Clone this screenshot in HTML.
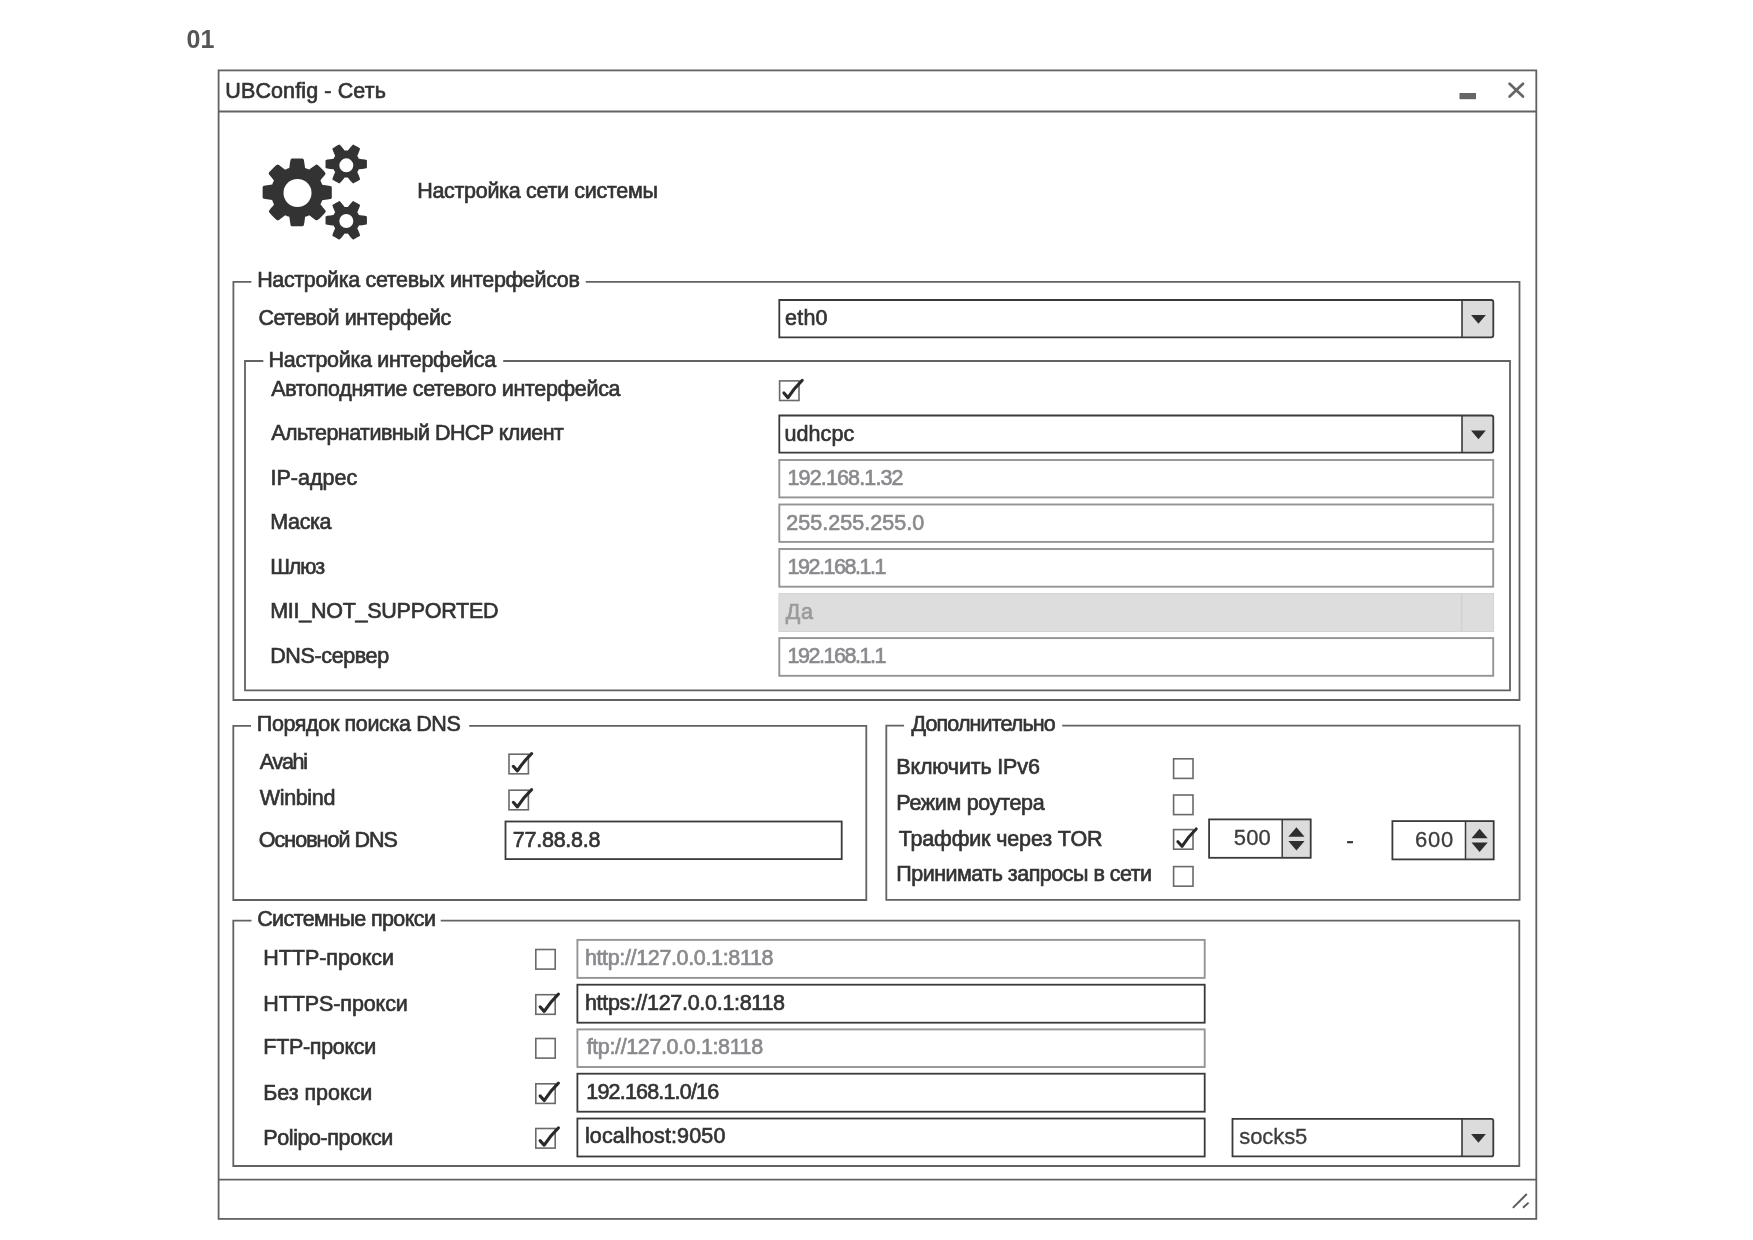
<!DOCTYPE html>
<html lang="ru"><head><meta charset="utf-8"><title>UBConfig - Сеть</title>
<style>
html,body{margin:0;padding:0;background:#fff;}
body{width:1753px;height:1240px;position:relative;overflow:hidden;font-family:"Liberation Sans", sans-serif;filter:blur(0.45px);}
svg{position:absolute;left:0;top:0;}
span{position:absolute;white-space:pre;line-height:1;}
</style></head><body>
<svg width="1753" height="1240" viewBox="0 0 1753 1240">
<rect x="218.6" y="70.4" width="1317.7" height="1148.5" rx="0" stroke="#626262" stroke-width="1.8" fill="none"/>
<path d="M218.6 111.5L1536.3 111.5" stroke="#626262" stroke-width="1.8" fill="none"/>
<path d="M218.6 1179.7L1536.3 1179.7" stroke="#626262" stroke-width="1.8" fill="none"/>
<rect x="1459.5" y="93" width="16.5" height="6.2" fill="#666"/>
<path d="M1509.6 83.8L1523 96.6M1523 83.8L1509.6 96.6" stroke="#666" stroke-width="2.7" stroke-linecap="round" fill="none"/>
<path d="M1512.9 1207.8L1526.8 1194M1523 1207.8L1528.6 1202.6" stroke="#5a5a5a" stroke-width="1.9" fill="none"/>
<path d="M251.4 281.8L233.4 281.8L233.4 700.0L1519.5 700.0L1519.5 281.8L585.8 281.8" stroke="#626262" stroke-width="1.8" fill="none"/>
<path d="M263.3 361.0L245.0 361.0L245.0 690.4L1510.0 690.4L1510.0 361.0L503.2 361.0" stroke="#626262" stroke-width="1.8" fill="none"/>
<path d="M251.0 725.9L233.3 725.9L233.3 900.0L866.3 900.0L866.3 725.9L469.2 725.9" stroke="#626262" stroke-width="1.8" fill="none"/>
<path d="M904.1 725.6L886.3 725.6L886.3 899.8L1519.6 899.8L1519.6 725.6L1062.2 725.6" stroke="#626262" stroke-width="1.8" fill="none"/>
<path d="M251.5 920.7L233.3 920.7L233.3 1166.0L1519.3 1166.0L1519.3 920.7L440.7 920.7" stroke="#626262" stroke-width="1.8" fill="none"/>
<path d="M1462 300.0H1491.3Q1493.3 300.0 1493.3 302.0V335.3Q1493.3 337.3 1491.3 337.3H1462Z" fill="#dcdcdc"/>
<path d="M779.3 300.0H1491.3Q1493.3 300.0 1493.3 302.0V335.3Q1493.3 337.3 1491.3 337.3H779.3Z" fill="none" stroke="#3a3a3a" stroke-width="1.8"/>
<path d="M1462 300.0L1462 337.3" stroke="#3a3a3a" stroke-width="1.6" fill="none"/>
<path d="M1471.05 315.05H1485.8500000000001L1478.45 323.75Z" fill="#2e2e2e"/>
<path d="M1462 415.5H1491.3Q1493.3 415.5 1493.3 417.5V450.6Q1493.3 452.6 1491.3 452.6H1462Z" fill="#dcdcdc"/>
<path d="M779.3 415.5H1491.3Q1493.3 415.5 1493.3 417.5V450.6Q1493.3 452.6 1491.3 452.6H779.3Z" fill="none" stroke="#3a3a3a" stroke-width="1.8"/>
<path d="M1462 415.5L1462 452.6" stroke="#3a3a3a" stroke-width="1.6" fill="none"/>
<path d="M1471.05 430.45000000000005H1485.8500000000001L1478.45 439.15000000000003Z" fill="#2e2e2e"/>
<path d="M1462 1118.8H1491.3Q1493.3 1118.8 1493.3 1120.8V1154.4Q1493.3 1156.4 1491.3 1156.4H1462Z" fill="#dcdcdc"/>
<path d="M1232.5 1118.8H1491.3Q1493.3 1118.8 1493.3 1120.8V1154.4Q1493.3 1156.4 1491.3 1156.4H1232.5Z" fill="none" stroke="#3a3a3a" stroke-width="1.8"/>
<path d="M1462 1118.8L1462 1156.4" stroke="#3a3a3a" stroke-width="1.6" fill="none"/>
<path d="M1471.05 1133.9999999999998H1485.8500000000001L1478.45 1142.6999999999998Z" fill="#2e2e2e"/>
<rect x="779.3" y="460.0" width="713.9" height="37.4" rx="0" stroke="#949498" stroke-width="1.9" fill="#fff"/>
<rect x="779.3" y="504.5" width="713.9" height="37.4" rx="0" stroke="#949498" stroke-width="1.9" fill="#fff"/>
<rect x="779.3" y="549.0" width="713.9" height="37.7" rx="0" stroke="#949498" stroke-width="1.9" fill="#fff"/>
<rect x="779.3" y="638.1" width="713.9" height="37.7" rx="0" stroke="#949498" stroke-width="1.9" fill="#fff"/>
<rect x="778.9" y="593.5" width="714.7" height="38.0" fill="#dddddd" stroke="#d4d4d4" stroke-width="1"/>
<path d="M1461.6 593.5L1461.6 631.5" stroke="#cfcfcf" stroke-width="1.4" fill="none"/>
<rect x="505.5" y="821.5" width="336.2" height="37.6" rx="0" stroke="#3a3a3a" stroke-width="1.8" fill="#fff"/>
<rect x="577.4" y="939.9" width="627.3" height="38.0" rx="0" stroke="#949498" stroke-width="1.9" fill="#fff"/>
<rect x="577.4" y="984.7" width="627.3" height="38.0" rx="0" stroke="#3a3a3a" stroke-width="1.8" fill="#fff"/>
<rect x="577.4" y="1029.4" width="627.3" height="37.6" rx="0" stroke="#949498" stroke-width="1.9" fill="#fff"/>
<rect x="577.4" y="1073.7" width="627.3" height="38.0" rx="0" stroke="#3a3a3a" stroke-width="1.8" fill="#fff"/>
<rect x="577.4" y="1118.5" width="627.3" height="38.0" rx="0" stroke="#3a3a3a" stroke-width="1.8" fill="#fff"/>
<rect x="1282.2" y="819.4" width="28.5" height="38.4" fill="#dcdcdc"/>
<rect x="1209.1" y="819.4" width="101.6" height="38.4" rx="0" stroke="#3a3a3a" stroke-width="1.8" fill="none"/>
<path d="M1282.2 819.4L1282.2 857.8" stroke="#3a3a3a" stroke-width="1.5" fill="none"/>
<path d="M1288.3500000000001 836.6999999999999L1296.45 827.1999999999999L1304.55 836.6999999999999Z M1288.3500000000001 840.8999999999999L1296.45 850.3999999999999L1304.55 840.8999999999999Z" fill="#2e2e2e"/>
<rect x="1465.5" y="821.1" width="28.2" height="38.3" fill="#dcdcdc"/>
<rect x="1392.4" y="821.1" width="101.3" height="38.3" rx="0" stroke="#3a3a3a" stroke-width="1.8" fill="none"/>
<path d="M1465.5 821.1L1465.5 859.4" stroke="#3a3a3a" stroke-width="1.5" fill="none"/>
<path d="M1471.5 838.35L1479.6 828.85L1487.6999999999998 838.35Z M1471.5 842.55L1479.6 852.05L1487.6999999999998 842.55Z" fill="#2e2e2e"/>
<rect x="779.6" y="380.9" width="19.4" height="19.6" fill="#fff" stroke="#6a6a6a" stroke-width="1.6"/>
<path d="M783.9 393.0L788.0 397.6Q794.1 388.1 802.2 380.3" fill="none" stroke="#2a2a2a" stroke-width="3.1" stroke-linecap="round" stroke-linejoin="round"/>
<rect x="509.0" y="754.2" width="19.4" height="19.6" fill="#fff" stroke="#6a6a6a" stroke-width="1.6"/>
<path d="M513.3 766.3L517.4 770.9Q523.5 761.4 531.6 753.6" fill="none" stroke="#2a2a2a" stroke-width="3.1" stroke-linecap="round" stroke-linejoin="round"/>
<rect x="509.0" y="790.2" width="19.4" height="19.6" fill="#fff" stroke="#6a6a6a" stroke-width="1.6"/>
<path d="M513.3 802.3L517.4 806.9Q523.5 797.4 531.6 789.6" fill="none" stroke="#2a2a2a" stroke-width="3.1" stroke-linecap="round" stroke-linejoin="round"/>
<rect x="1173.6" y="758.8" width="19.4" height="19.6" fill="#fff" stroke="#6a6a6a" stroke-width="1.6"/>
<rect x="1173.6" y="795.0" width="19.4" height="19.6" fill="#fff" stroke="#6a6a6a" stroke-width="1.6"/>
<rect x="1173.6" y="829.6" width="19.4" height="19.6" fill="#fff" stroke="#6a6a6a" stroke-width="1.6"/>
<path d="M1177.9 841.7L1182.0 846.3Q1188.1 836.8 1196.2 829.0" fill="none" stroke="#2a2a2a" stroke-width="3.1" stroke-linecap="round" stroke-linejoin="round"/>
<rect x="1173.6" y="866.6" width="19.4" height="19.6" fill="#fff" stroke="#6a6a6a" stroke-width="1.6"/>
<rect x="535.8" y="949.5" width="19.4" height="19.6" fill="#fff" stroke="#6a6a6a" stroke-width="1.6"/>
<rect x="535.8" y="994.7" width="19.4" height="19.6" fill="#fff" stroke="#6a6a6a" stroke-width="1.6"/>
<path d="M540.1 1006.8L544.2 1011.4Q550.3 1001.9 558.4 994.1" fill="none" stroke="#2a2a2a" stroke-width="3.1" stroke-linecap="round" stroke-linejoin="round"/>
<rect x="535.8" y="1038.5" width="19.4" height="19.6" fill="#fff" stroke="#6a6a6a" stroke-width="1.6"/>
<rect x="535.8" y="1083.8" width="19.4" height="19.6" fill="#fff" stroke="#6a6a6a" stroke-width="1.6"/>
<path d="M540.1 1095.9L544.2 1100.5Q550.3 1091.0 558.4 1083.2" fill="none" stroke="#2a2a2a" stroke-width="3.1" stroke-linecap="round" stroke-linejoin="round"/>
<rect x="535.8" y="1128.5" width="19.4" height="19.6" fill="#fff" stroke="#6a6a6a" stroke-width="1.6"/>
<path d="M540.1 1140.6L544.2 1145.2Q550.3 1135.7 558.4 1127.9" fill="none" stroke="#2a2a2a" stroke-width="3.1" stroke-linecap="round" stroke-linejoin="round"/>
<path transform="translate(262.2,143.4) scale(0.0547) translate(640,896) scale(0.988,0.968) translate(-640,-896)" d="M1280 805v185q0 10-7 19.500t-16 10.500l-155 24q-11 35-32 76 34 48 90 115 7 11 7 20 0 12-7 19-23 30-82.500 89.500t-78.500 59.500q-11 0-21-7l-115-90q-37 19-77 31-11 108-23 155-7 24-30 24h-186q-11 0-20-7.500t-10-17.500l-23-153q-34-10-75-31l-118 89q-7 7-20 7-11 0-21-8-144-133-144-160 0-9 7-19 10-14 41-53t47-61q-23-44-35-82l-152-24q-10-1-17-9.500t-7-19.500v-185q0-10 7-19.500t16-10.500l155-24q11-35 32-76-34-48-90-115-7-11-7-20 0-12 7-20 22-30 82-89t79-59q11 0 21 7l115 90q34-18 77-32 11-108 23-154 7-24 30-24h186q11 0 20 7.500t10 17.500l23 153q34 10 75 31l118-89q8-7 20-7 11 0 21 8 144 133 144 160 0 8-7 19-12 16-42 54t-45 60q23 48 34 82l152 23q10 2 17 10.500t7 19.500z" fill="#333"/>
<path transform="translate(262.5,144.0) scale(0.0547) translate(640,896) scale(1,1) translate(-640,-896)" d="M896 896q0-106-75-181t-181-75-181 75-75 181 75 181 181 75 181-75 75-181z" fill="#fff"/>
<path transform="translate(262.2,143.0) scale(0.0547) translate(1536,384) scale(0.985,0.968) translate(-1536,-384)" d="M1920 314v140q0 16-149 31-12 27-30 52 51 113 51 138 0 4-4 7-122 71-124 71-8 0-46-47t-52-68q-20 2-30 2t-30-2q-14 21-52 68t-46 47q-2 0-124-71-4-3-4-7 0-25 51-138-18-25-30-52-149-15-149-31v-140q0-16 149-31 13-29 30-52-51-113-51-138 0-4 4-7 4-2 35-20t59-34 30-16q8 0 46 46.500t52 67.500q20-2 30-2t30 2q51-71 92-112l6-2q4 0 124 70 4 3 4 7 0 25-51 138 17 23 30 52 149 15 149 31z" fill="#333"/>
<path transform="translate(262.3,144.29999999999998) scale(0.0547) translate(1536,384) scale(1,1) translate(-1536,-384)" d="M1664 384q0-52-38-90t-90-38-90 38-38 90q0 53 37.500 90.500t90.500 37.500 90.500-37.500 37.500-90.500z" fill="#fff"/>
<path transform="translate(262.2,143.29999999999998) scale(0.0547) translate(1536,1408) scale(0.985,0.955) translate(-1536,-1408)" d="M1920 1338v140q0 16-149 31-12 27-30 52 51 113 51 138 0 4-4 7-122 71-124 71-8 0-46-47t-52-68q-20 2-30 2t-30-2q-14 21-52 68t-46 47q-2 0-124-71-4-3-4-7 0-25 51-138-18-25-30-52-149-15-149-31v-140q0-16 149-31 13-29 30-52-51-113-51-138 0-4 4-7 4-2 35-20t59-34 30-16q8 0 46 46.500t52 67.500q20-2 30-2t30 2q51-71 92-112l6-2q4 0 124 70 4 3 4 7 0 25-51 138 17 23 30 52 149 15 149 31z" fill="#333"/>
<path transform="translate(262.3,144.0) scale(0.0547) translate(1536,1408) scale(1,1) translate(-1536,-1408)" d="M1664 1408q0-52-38-90t-90-38-90 38-38 90q0 53 37.5 90.500t90.500 37.500 90.500-37.500 37.500-90.500z" fill="#fff"/>
</svg>
<span style="left:186.60px;top:27.00px;font-size:25px;letter-spacing:0.000px;color:#555;font-weight:700;">01</span>
<span style="left:225.30px;top:81.00px;font-size:21.5px;letter-spacing:0.119px;color:#333;-webkit-text-stroke:0.65px #333;">UBConfig - Сеть</span>
<span style="left:417.20px;top:181.00px;font-size:21.5px;letter-spacing:-0.300px;color:#333;-webkit-text-stroke:0.65px #333;">Настройка сети системы</span>
<span style="left:257.20px;top:270.00px;font-size:21.5px;letter-spacing:-0.349px;color:#333;-webkit-text-stroke:0.65px #333;">Настройка сетевых интерфейсов</span>
<span style="left:258.50px;top:308.00px;font-size:21.5px;letter-spacing:-0.407px;color:#333;-webkit-text-stroke:0.65px #333;">Сетевой интерфейс</span>
<span style="left:785.00px;top:308.00px;font-size:21.5px;letter-spacing:0.237px;color:#333;-webkit-text-stroke:0.65px #333;">eth0</span>
<span style="left:268.60px;top:350.00px;font-size:21.5px;letter-spacing:-0.317px;color:#333;-webkit-text-stroke:0.65px #333;">Настройка интерфейса</span>
<span style="left:271.20px;top:379.00px;font-size:21.5px;letter-spacing:-0.330px;color:#333;-webkit-text-stroke:0.65px #333;">Автоподнятие сетевого интерфейса</span>
<span style="left:271.20px;top:423.00px;font-size:21.5px;letter-spacing:-0.544px;color:#333;-webkit-text-stroke:0.65px #333;">Альтернативный DHCP клиент</span>
<span style="left:784.60px;top:424.00px;font-size:21.5px;letter-spacing:0.044px;color:#333;-webkit-text-stroke:0.65px #333;">udhcpc</span>
<span style="left:270.50px;top:468.00px;font-size:21.5px;letter-spacing:0.001px;color:#333;-webkit-text-stroke:0.65px #333;">IP-адрес</span>
<span style="left:270.20px;top:512.00px;font-size:21.5px;letter-spacing:-0.334px;color:#333;-webkit-text-stroke:0.65px #333;">Маска</span>
<span style="left:270.20px;top:557.00px;font-size:21.5px;letter-spacing:-1.125px;color:#333;-webkit-text-stroke:0.65px #333;">Шлюз</span>
<span style="left:270.20px;top:601.00px;font-size:21.5px;letter-spacing:-0.265px;color:#333;-webkit-text-stroke:0.65px #333;">MII_NOT_SUPPORTED</span>
<span style="left:270.20px;top:646.00px;font-size:21.5px;letter-spacing:-0.373px;color:#333;-webkit-text-stroke:0.65px #333;">DNS-сервер</span>
<span style="left:787.50px;top:468.00px;font-size:21.5px;letter-spacing:-0.862px;color:#8a8a8e;-webkit-text-stroke:0.65px #8a8a8e;">192.168.1.32</span>
<span style="left:786.30px;top:513.00px;font-size:21.5px;letter-spacing:0.039px;color:#8a8a8e;-webkit-text-stroke:0.65px #8a8a8e;">255.255.255.0</span>
<span style="left:787.50px;top:557.00px;font-size:21.5px;letter-spacing:-1.472px;color:#8a8a8e;-webkit-text-stroke:0.65px #8a8a8e;">192.168.1.1</span>
<span style="left:785.80px;top:602.00px;font-size:21.5px;letter-spacing:0.639px;color:#9a9a9a;-webkit-text-stroke:0.65px #9a9a9a;">Да</span>
<span style="left:787.50px;top:646.00px;font-size:21.5px;letter-spacing:-1.472px;color:#8a8a8e;-webkit-text-stroke:0.65px #8a8a8e;">192.168.1.1</span>
<span style="left:256.80px;top:714.00px;font-size:21.5px;letter-spacing:-0.363px;color:#333;-webkit-text-stroke:0.65px #333;">Порядок поиска DNS</span>
<span style="left:259.80px;top:752.00px;font-size:21.5px;letter-spacing:-1.279px;color:#333;-webkit-text-stroke:0.65px #333;">Avahi</span>
<span style="left:259.80px;top:788.00px;font-size:21.5px;letter-spacing:-0.353px;color:#333;-webkit-text-stroke:0.65px #333;">Winbind</span>
<span style="left:258.80px;top:830.00px;font-size:21.5px;letter-spacing:-0.990px;color:#333;-webkit-text-stroke:0.65px #333;">Основной DNS</span>
<span style="left:512.80px;top:830.00px;font-size:21.5px;letter-spacing:-0.251px;color:#333;-webkit-text-stroke:0.65px #333;">77.88.8.8</span>
<span style="left:911.50px;top:714.00px;font-size:21.5px;letter-spacing:-0.874px;color:#333;-webkit-text-stroke:0.65px #333;">Дополнительно</span>
<span style="left:896.30px;top:757.00px;font-size:21.5px;letter-spacing:-0.157px;color:#333;-webkit-text-stroke:0.65px #333;">Включить IPv6</span>
<span style="left:896.30px;top:793.00px;font-size:21.5px;letter-spacing:-0.317px;color:#333;-webkit-text-stroke:0.65px #333;">Режим роутера</span>
<span style="left:898.70px;top:829.00px;font-size:21.5px;letter-spacing:-0.138px;color:#333;-webkit-text-stroke:0.65px #333;">Траффик через TOR</span>
<span style="left:896.30px;top:864.00px;font-size:21.5px;letter-spacing:-0.503px;color:#333;-webkit-text-stroke:0.65px #333;">Принимать запросы в сети</span>
<span style="left:1233.80px;top:827.00px;font-size:22px;letter-spacing:0.115px;color:#3c3c3c;-webkit-text-stroke:0.3px #3c3c3c;">500</span>
<span style="left:1346.40px;top:831.00px;font-size:21.5px;letter-spacing:0.000px;color:#333;-webkit-text-stroke:0.65px #333;">-</span>
<span style="left:1414.90px;top:829.00px;font-size:22px;letter-spacing:0.815px;color:#3c3c3c;-webkit-text-stroke:0.3px #3c3c3c;">600</span>
<span style="left:257.20px;top:909.00px;font-size:21.5px;letter-spacing:-0.609px;color:#333;-webkit-text-stroke:0.65px #333;">Системные прокси</span>
<span style="left:263.30px;top:948.00px;font-size:21.5px;letter-spacing:-0.055px;color:#333;-webkit-text-stroke:0.65px #333;">HTTP-прокси</span>
<span style="left:263.30px;top:994.00px;font-size:21.5px;letter-spacing:-0.099px;color:#333;-webkit-text-stroke:0.65px #333;">HTTPS-прокси</span>
<span style="left:263.30px;top:1037.00px;font-size:21.5px;letter-spacing:-0.302px;color:#333;-webkit-text-stroke:0.65px #333;">FTP-прокси</span>
<span style="left:263.30px;top:1083.00px;font-size:21.5px;letter-spacing:-0.053px;color:#333;-webkit-text-stroke:0.65px #333;">Без прокси</span>
<span style="left:263.30px;top:1128.00px;font-size:21.5px;letter-spacing:-0.407px;color:#333;-webkit-text-stroke:0.65px #333;">Polipo-прокси</span>
<span style="left:584.90px;top:948.00px;font-size:21.5px;letter-spacing:-0.355px;color:#8a8a8e;-webkit-text-stroke:0.65px #8a8a8e;">http://127.0.0.1:8118</span>
<span style="left:584.90px;top:993.00px;font-size:21.5px;letter-spacing:-0.297px;color:#333;-webkit-text-stroke:0.65px #333;">https://127.0.0.1:8118</span>
<span style="left:586.70px;top:1037.00px;font-size:21.5px;letter-spacing:-0.381px;color:#8a8a8e;-webkit-text-stroke:0.65px #8a8a8e;">ftp://127.0.0.1:8118</span>
<span style="left:586.30px;top:1082.00px;font-size:21.5px;letter-spacing:-0.816px;color:#333;-webkit-text-stroke:0.65px #333;">192.168.1.0/16</span>
<span style="left:584.90px;top:1126.00px;font-size:21.5px;letter-spacing:0.138px;color:#333;-webkit-text-stroke:0.65px #333;">localhost:9050</span>
<span style="left:1239.30px;top:1126.00px;font-size:22px;letter-spacing:-0.087px;color:#3c3c3c;-webkit-text-stroke:0.3px #3c3c3c;">socks5</span>
</body></html>
